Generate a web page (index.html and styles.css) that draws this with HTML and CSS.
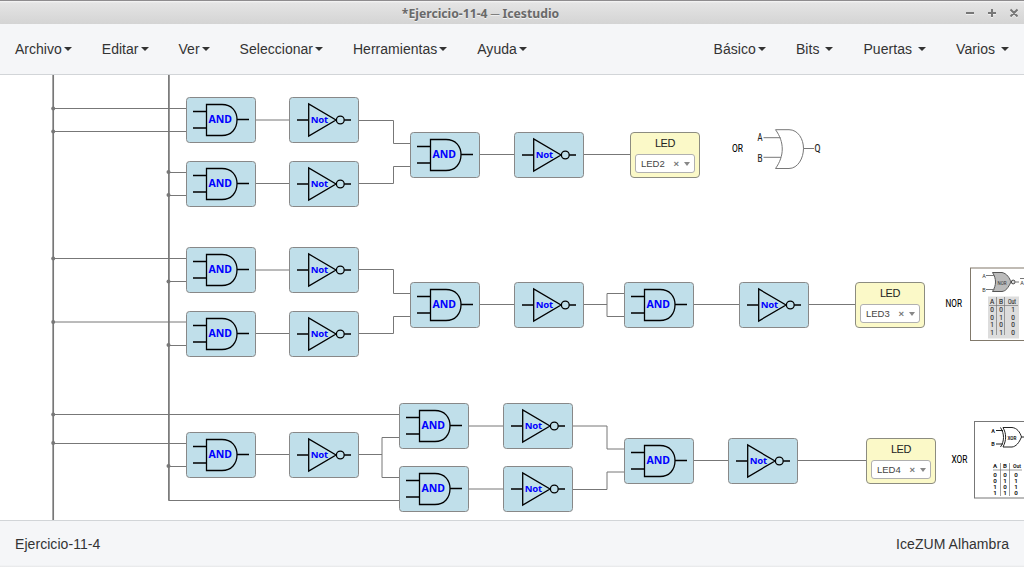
FILE: index.html
```html
<!DOCTYPE html>
<html lang="es">
<head>
<meta charset="utf-8">
<title>Ejercicio-11-4 — Icestudio</title>
<link rel="stylesheet" href="styles.css">
</head>
<body>
<header class="titlebar">
  <h1 class="title">*Ejercicio-11-4 ─ Icestudio</h1>
  <svg class="controls" width="54" height="14" viewBox="0 0 54 14"><g class="control-shadow"><path d="M2 8h8M24 8h8M28 4v8M46.500 4.500l7 7M53.500 4.500l-7 7"/></g><path d="M2 7h8M24 7h8M28 3v8M46.500 3.500l7 7M53.500 3.500l-7 7"/></svg>
</header>
<nav class="menubar">
  <div class="menu menu-main">
    <a>Archivo<i class="caret"></i></a><a>Editar<i class="caret"></i></a><a>Ver<i class="caret"></i></a><a>Seleccionar<i class="caret"></i></a><a>Herramientas<i class="caret"></i></a><a>Ayuda<i class="caret"></i></a>
  </div>
  <div class="menu menu-blocks">
    <a>Básico<i class="caret"></i></a><a>Bits <i class="caret"></i></a><a>Puertas <i class="caret"></i></a><a>Varios <i class="caret"></i></a>
  </div>
</nav>
<main class="canvas">
  <svg class="diagram" width="1024" height="445" viewBox="0 75 1024 445">
    <defs>
      <g id="and">
        <rect class="block" x=".5" y=".5" width="69" height="45" rx="3"/>
        <path class="gate" d="M20.500 7.500H36C45.500 7.500 51 14 51 22.800S45.500 38.500 36 38.500H20.500ZM7 14.500H20M7 31H20M51 22.500H63"/>
      </g>
      <g id="not">
        <rect class="block" x=".5" y=".5" width="69" height="45" rx="3"/>
        <path class="gate" d="M19.700 7V39L47 23ZM8 23H19M55.200 23H62"/>
        <circle class="gate" cx="51.300" cy="23" r="3.900"/>
      </g>
    </defs>
    <g class="bus"><path d="M53.200 75V520M168.900 75V500.500"/></g>
    <g class="wire">
      <path d="M53 108.500H187M53 131.500H187M168.500 172.500H187M168.500 195.500H187"/>
      <path d="M255 120H290M255 183.500H290M358 120.500H393.500V143.500H411M358 183.500H393.500V166.500H411M479 154.500H515M583 154.500H631"/>
      <path d="M53 258.500H187M168.500 281.500H187M53 322H187M168.500 345.500H187"/>
      <path d="M255 270H290M255 333.500H290M358 269.500H393.500V293.500H411M358 333.500H393.500V316.500H411M479 304.500H515M583 304.500H607M625 293.500H607V316.500H625M693 304.500H740M808 304.500H856"/>
      <path d="M53 414.500H400M53 443.500H187M168.500 466.500H187M168.500 500.500H400M255 454.500H290M358 454.500H382M400 437.500H382V477.500H400"/>
      <path d="M468 426H504M468 489H504M572 426H607V449H625M572 489.500H607V472H625M693 460.500H729M797 460.500H867"/>
    </g>
    <g class="junction">
      <circle cx="53.200" cy="108.500" r="2"/><circle cx="53.200" cy="131.500" r="2"/><circle cx="168.500" cy="172" r="2"/><circle cx="168.500" cy="195" r="2"/>
      <circle cx="53.200" cy="258.500" r="2"/><circle cx="168.500" cy="281.500" r="2"/><circle cx="53.200" cy="322" r="2"/><circle cx="168.500" cy="345" r="2"/>
      <circle cx="53.200" cy="414.500" r="2"/><circle cx="53.200" cy="443" r="2"/><circle cx="168.500" cy="466" r="2"/>
    </g>
    <g>
      <use href="#and" x="186" y="97"/><use href="#and" x="186" y="161"/><use href="#and" x="410" y="132"/>
      <use href="#and" x="186" y="247"/><use href="#and" x="186" y="311"/><use href="#and" x="410" y="282"/><use href="#and" x="624" y="282"/>
      <use href="#and" x="186" y="432"/><use href="#and" x="399" y="403"/><use href="#and" x="399" y="466"/><use href="#and" x="624" y="438"/>
      <use href="#not" x="289" y="97"/><use href="#not" x="289" y="161"/><use href="#not" x="514" y="132"/>
      <use href="#not" x="289" y="247"/><use href="#not" x="289" y="311"/><use href="#not" x="514" y="282"/><use href="#not" x="739" y="282"/>
      <use href="#not" x="289" y="432"/><use href="#not" x="503" y="403"/><use href="#not" x="503" y="466"/><use href="#not" x="728" y="438"/>
    </g>
    <g class="and-label">
      <text x="208.500" y="123" textLength="23.500" lengthAdjust="spacingAndGlyphs">AND</text><text x="208.500" y="187" textLength="23.500" lengthAdjust="spacingAndGlyphs">AND</text><text x="432.500" y="158" textLength="23.500" lengthAdjust="spacingAndGlyphs">AND</text>
      <text x="208.500" y="273" textLength="23.500" lengthAdjust="spacingAndGlyphs">AND</text><text x="208.500" y="337" textLength="23.500" lengthAdjust="spacingAndGlyphs">AND</text><text x="432.500" y="308" textLength="23.500" lengthAdjust="spacingAndGlyphs">AND</text><text x="646.500" y="308" textLength="23.500" lengthAdjust="spacingAndGlyphs">AND</text>
      <text x="208.500" y="458" textLength="23.500" lengthAdjust="spacingAndGlyphs">AND</text><text x="421.500" y="429" textLength="23.500" lengthAdjust="spacingAndGlyphs">AND</text><text x="421.500" y="492" textLength="23.500" lengthAdjust="spacingAndGlyphs">AND</text><text x="646.500" y="464" textLength="23.500" lengthAdjust="spacingAndGlyphs">AND</text>
    </g>
    <g class="not-label">
      <text x="310.700" y="123.300" textLength="17.500">Not</text><text x="310.700" y="187.300" textLength="17.500">Not</text><text x="535.700" y="158.300" textLength="17.500">Not</text>
      <text x="310.700" y="273.300" textLength="17.500">Not</text><text x="310.700" y="337.300" textLength="17.500">Not</text><text x="535.700" y="308.300" textLength="17.500">Not</text><text x="760.700" y="308.300" textLength="17.500">Not</text>
      <text x="310.700" y="458.300" textLength="17.500">Not</text><text x="524.700" y="429.300" textLength="17.500">Not</text><text x="524.700" y="492.300" textLength="17.500">Not</text><text x="749.700" y="464.300" textLength="17.500">Not</text>
    </g>
    <g class="caption">
      <text x="732" y="152" textLength="11" lengthAdjust="spacingAndGlyphs">OR</text><text x="945.500" y="307" textLength="16.500" lengthAdjust="spacingAndGlyphs">NOR</text><text x="951.500" y="463" textLength="16" lengthAdjust="spacingAndGlyphs">XOR</text>
    </g>

    <g class="or-picture">
      <path d="M775.500 129.700H789C798 129.700 803.500 139 803.500 148.500S798 168.500 789 168.500H775.500C784.500 156 784.500 142 775.500 129.700ZM763.500 137.700H780.500M763.500 157.300H781M803.500 148.500H814"/>
      <text x="757.500" y="141" textLength="5" lengthAdjust="spacingAndGlyphs">A</text><text x="757.500" y="161.500" textLength="5" lengthAdjust="spacingAndGlyphs">B</text><text x="814.500" y="152" textLength="6" lengthAdjust="spacingAndGlyphs">Q</text>
    </g>

    <g class="nor-picture">
      <rect class="frame" x="970.500" y="268" width="70" height="72.500"/>
      <path class="symbol" d="M992.500 272.500H1002C1007 273.500 1009.500 278 1011 282C1008 288 1006 291 1002 291.500H992.500C996.500 285 996.500 279 992.500 272.500Z"/>
      <path class="lead" d="M986 275.500H994.500M986 289.500H994.500M1015.500 282H1019M1020 278.500H1024"/>
      <circle class="bubble" cx="1013.200" cy="282" r="1.900"/>
      <rect class="table-bg" x="988" y="296.500" width="31" height="42"/>
      <path class="grid" d="M989 305.500H1018M996.500 297V335M1004.500 297V335"/>
      <g class="small"><text x="984" y="278">A</text><text x="984" y="292">B</text><text x="1002" y="284.500" textLength="9" lengthAdjust="spacingAndGlyphs">NOR</text><text x="1022" y="285">A</text></g>
      <g class="cells"><text x="992" y="304">A</text><text x="1001" y="304">B</text><text x="1012" y="304" textLength="8" lengthAdjust="spacingAndGlyphs">Out</text>
      <text x="992" y="312">0</text><text x="1001" y="312">0</text><text x="1013" y="312">1</text>
      <text x="992" y="319.500">0</text><text x="1001" y="319.500">1</text><text x="1013" y="319.500">0</text>
      <text x="992" y="327">1</text><text x="1001" y="327">0</text><text x="1013" y="327">0</text>
      <text x="992" y="334.500">1</text><text x="1001" y="334.500">1</text><text x="1013" y="334.500">0</text></g>
    </g>

    <g class="xor-picture">
      <rect class="frame" x="974.500" y="421.500" width="70" height="76.500"/>
      <path class="symbol" d="M1003 427.500H1012C1017 428 1020 432 1021.500 437C1019 443 1016 446.500 1012 447H1003C1006.500 440 1006.500 434 1003 427.500ZM1000.500 427.500C1004.500 434 1004.500 441 1000.500 447M996 430.500H1003M996 444H1003M1021.500 437H1024"/>
      <g class="small"><text x="993" y="432.500">A</text><text x="993" y="446">B</text><text x="1012" y="439.500" textLength="9" lengthAdjust="spacingAndGlyphs">XOR</text></g>
      <path class="grid" d="M993 470H1022M1000.500 463V496M1009.500 463V496"/>
      <g class="cells"><text x="995" y="468">A</text><text x="1005" y="468">B</text><text x="1017" y="468" textLength="8" lengthAdjust="spacingAndGlyphs">Out</text>
      <text x="995" y="476.500">0</text><text x="1005" y="476.500">0</text><text x="1016" y="476.500">0</text>
      <text x="995" y="482.800">0</text><text x="1005" y="482.800">1</text><text x="1016" y="482.800">1</text>
      <text x="995" y="489">1</text><text x="1005" y="489">0</text><text x="1016" y="489">1</text>
      <text x="995" y="495.300">1</text><text x="1005" y="495.300">1</text><text x="1016" y="495.300">0</text></g>
    </g>
  </svg>
  <div class="led led-2"><span class="led-name">LED</span><div class="pin"><span class="pin-name">LED2</span><span class="clear">×</span><i class="arrow"></i></div></div>
  <div class="led led-3"><span class="led-name">LED</span><div class="pin"><span class="pin-name">LED3</span><span class="clear">×</span><i class="arrow"></i></div></div>
  <div class="led led-4"><span class="led-name">LED</span><div class="pin"><span class="pin-name">LED4</span><span class="clear">×</span><i class="arrow"></i></div></div>
</main>
<footer class="statusbar"><span>Ejercicio-11-4</span><span>IceZUM Alhambra</span></footer>
</body>
</html>
```

FILE: styles.css
```css
* { box-sizing: border-box; }
body {
  margin: 0;
  width: 1024px;
  height: 567px;
  display: flex;
  flex-direction: column;
  overflow: hidden;
  background: #fff;
  color: #333;
  font: 14px/20px "Liberation Sans", Arial, sans-serif;
  letter-spacing: .06px;
}
.titlebar {
  height: 24px;
  flex: none;
  display: grid;
  grid-template-columns: 60px 1fr 60px;
  align-items: center;
  padding-top: 2px;
  border-top: 1px solid #8e8c8e;
  background: linear-gradient(#f6f6f6 0, #e4e4e4 2px, #d4d4d4 100%);
}
.title {
  grid-column: 2;
  margin: 0;
  padding-right: 63px;
  text-align: center;
  font: bold 12.2px/18px "Noto Sans", sans-serif;
  letter-spacing: 0;
  color: #696969;
  text-shadow: 0 1px #f2f2f2;
}
.controls { fill: none; stroke: #777; stroke-width: 2; margin-bottom: 1px; }
.control-shadow { stroke: #f0f0f0; }
.menubar {
  height: 51px;
  flex: none;
  display: flex;
  justify-content: space-between;
  padding: 15px;
  background: #f5f6f8;
  border-bottom: 1px solid #d2d5d8;
}
.menu { display: flex; gap: 30px; white-space: pre; }
.menu-main { letter-spacing: .02px; }
.menu a { display: flex; align-items: center; height: 20px; }
.caret {
  margin-left: 2px;
  border-top: 4px solid #333;
  border-left: 4px solid transparent;
  border-right: 4px solid transparent;
}
.canvas { position: relative; height: 445px; flex: none; overflow: hidden; letter-spacing: 0; }
.diagram { display: block; }
.block { fill: #c0dfea; stroke: #888; }
.gate { fill: none; stroke: #000; stroke-width: 1.3; }
.bus { fill: none; stroke: #777; stroke-width: 1.7; }
.wire { fill: none; stroke: #777; }
.junction { fill: #777; }
.and-label, .not-label { fill: #00f; font: bold 11px "Noto Sans", sans-serif; }
.not-label { font-size: 9.5px; }
.caption { fill: #000; stroke: #000; stroke-width: .1; font: 10px Roboto, sans-serif; }
.or-picture { fill: none; stroke: #777; }
.or-picture text { fill: #222; stroke: #222; stroke-width: .15; font: 10px Roboto, sans-serif; }
.frame { fill: #fff; stroke: #777; }
.nor-picture .frame { stroke: #81796b; }
.nor-picture .symbol { fill: #bbb; stroke: #555; }
.nor-picture .lead { stroke: #777; }
.bubble { fill: #ddd; stroke: #444; }
.table-bg { fill: #ddd; }
.grid { fill: none; stroke: #777; stroke-width: .7; }
.small, .cells { fill: #333; text-anchor: middle; font: 5.5px Roboto, sans-serif; }
.cells { font-size: 6.5px; stroke: #333; stroke-width: .15; }
.xor-picture .symbol { fill: none; stroke: #222; }
.xor-picture .small, .xor-picture .cells { fill: #222; font-weight: bold; }
.xor-picture .cells { font-size: 6.2px; stroke: none; }
.led {
  position: absolute;
  width: 70px;
  height: 46px;
  padding: 3px 4px;
  border: 1px solid #8c8c80;
  border-radius: 4px;
  background: #fbf9c8;
  text-align: center;
}
.led-2 { left: 630px; top: 57px; }
.led-3 { left: 855px; top: 207px; }
.led-4 { left: 866px; top: 363px; }
.led-name { display: block; font: 11px/15px "Liberation Sans", Arial, sans-serif; letter-spacing: -.4px; color: #222; }
.pin {
  display: flex;
  align-items: center;
  width: 60px;
  height: 19px;
  margin-top: 3px;
  padding: 0 4px 0 5px;
  border: 1px solid #b0b0b0;
  border-radius: 3px;
  background: #fff;
  color: #444;
  font: 9.5px/17px "Liberation Sans", Arial, sans-serif;
}
.pin-name { flex: 1; text-align: left; }
.clear { font-weight: bold; margin-right: 5px; color: #777; }
.arrow { border-top: 4px solid #888; border-left: 3px solid transparent; border-right: 3px solid transparent; }
.statusbar {
  height: 47px;
  flex: none;
  display: flex;
  justify-content: space-between;
  padding: 13px 15px;
  border-top: 1px solid #d2d5d8;
  background: linear-gradient(#f5f6f8 44px, #e6e7e8);
}
```
